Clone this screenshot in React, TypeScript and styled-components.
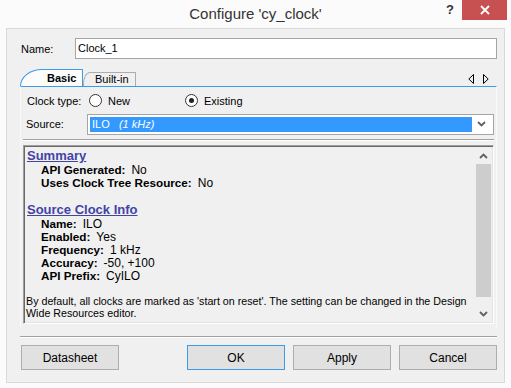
import React from 'react';
import styled, { createGlobalStyle } from 'styled-components';

const Global = createGlobalStyle`
  html, body { margin: 0; padding: 0; background: #fbfbfb; }
  body { font-family: "Liberation Sans", Arial, sans-serif; }
  * { box-sizing: border-box; }
`;

const Window = styled.div`
  width: 511px;
  height: 388px;
  background: #fbfbfb;
  display: flex;
  flex-direction: column;
  overflow: hidden;
`;

const TitleBar = styled.div`
  height: 28px;
  flex: none;
  display: grid;
  grid-template-columns: 71px 1fr 71px;
`;

const Title = styled.div`
  text-align: center;
  font-family: "Liberation Sans", Arial, sans-serif;
  font-size: 15px;
  line-height: 28px;
  color: #333;
`;

const Controls = styled.div`
  display: flex;
  justify-content: flex-end;
  align-items: flex-start;
  padding-right: 4px;
`;

const Help = styled.div`
  width: 16px;
  margin-right: 4px;
  text-align: center;
  font-family: "Liberation Sans", Arial, sans-serif;
  font-weight: bold;
  font-size: 13px;
  line-height: 20px;
  color: #333;
`;

const Close = styled.div`
  width: 45px;
  height: 20px;
  background: #c75050;
  display: flex;
  align-items: center;
  justify-content: center;
`;

const Body = styled.div`
  flex: 1;
  margin: 0 6px 5px 6px;
  border: 1px solid #d9d9d9;
  background: #f0f0f0;
  padding: 9px 7px 0 13px;
  display: flex;
  flex-direction: column;
  font-size: 11px;
  color: #000;
`;

const FieldRow = styled.div`
  display: flex;
  align-items: center;
  height: 21px;
`;

const Label = styled.div<{ $w: number; $pad?: number }>`
  width: ${(p) => p.$w}px;
  flex: none;
  padding-left: ${(p) => p.$pad ?? 1}px;
  font-size: 11px;
  color: #000;
`;

const TextInput = styled.div`
  flex: 1;
  height: 21px;
  border: 1px solid #a5a5a5;
  background: #fff;
  padding-left: 2px;
  font-size: 11px;
  line-height: 19px;
`;

const TabControl = styled.div`
  margin-top: 10px;
  display: flex;
  flex-direction: column;
`;

const TabStrip = styled.div`
  height: 17px;
  display: flex;
  align-items: flex-end;
`;

const Tab = styled.div<{ $active?: boolean; $w: number }>`
  width: ${(p) => p.$w}px;
  height: ${(p) => (p.$active ? 17 : 14)}px;
  border: 1px solid ${(p) => (p.$active ? '#3c9be8' : '#acacac')};
  border-bottom: none;
  border-radius: ${(p) => (p.$active ? '22px 1px 0 0 / 17px 1px 0 0' : '7px 1px 0 0 / 12px 1px 0 0')};
  background: ${(p) => (p.$active ? '#fcfcfc' : '#f0f0f0')};
  font-size: 11px;
  font-weight: ${(p) => (p.$active ? 'bold' : 'normal')};
  line-height: ${(p) => (p.$active ? 16 : 13)}px;
  padding-left: ${(p) => (p.$active ? 26 : 11)}px;
  color: #000;
`;

const TabArrows = styled.div`
  margin-left: auto;
  display: flex;
  gap: 9px;
  align-self: center;
  margin-right: 8px;
  margin-top: 2px;
`;

const Page = styled.div`
  border-top: 1px solid #3c9be8;
  border-left: 1px solid #f8f8f8;
  border-right: 1px solid #fafafa;
  height: 241px;
  padding: 0 2px;
  display: flex;
  flex-direction: column;
`;

const PageRow = styled.div<{ $h: number; $pad?: number; $top?: number }>`
  height: ${(p) => p.$h}px;
  display: flex;
  align-items: center;
  padding-left: ${(p) => p.$pad ?? 3}px;
  padding-top: ${(p) => p.$top ?? 0}px;
`;

const RadioOption = styled.div<{ $w?: number }>`
  display: flex;
  align-items: center;
  gap: 6px;
  width: ${(p) => (p.$w ? `${p.$w}px` : 'auto')};
  font-size: 11px;
`;

const RadioCircle = styled.div<{ $checked?: boolean }>`
  width: 13px;
  height: 13px;
  border-radius: 50%;
  border: 1px solid #333;
  background: #fff;
  display: flex;
  align-items: center;
  justify-content: center;
  &::after {
    content: '';
    width: 5px;
    height: 5px;
    border-radius: 50%;
    background: ${(p) => (p.$checked ? '#222' : 'transparent')};
  }
`;

const Select = styled.div`
  flex: 1;
  height: 21px;
  border: 1px solid #a5a5a5;
  background: #fff;
  display: flex;
  align-items: center;
  padding: 2px;
`;

const Selected = styled.div`
  flex: 1;
  height: 15px;
  background: #3399ff;
  color: #fff;
  font-size: 11px;
  line-height: 15px;
  padding-left: 2px;
  white-space: pre;
`;

const Hint = styled.span`
  font-style: italic;
`;

const SelectArrow = styled.div`
  width: 19px;
  display: flex;
  justify-content: center;
`;

const Separator = styled.div<{ $top?: number }>`
  margin-top: ${(p) => p.$top ?? 0}px;
  border-top: 1px solid #a0a0a0;
  border-bottom: 1px solid #fff;
`;

const InfoBox = styled.div`
  margin-top: 4px;
  height: 179px;
  border-style: solid;
  border-width: 1px;
  border-color: #a0a0a0 #fff #fff #a0a0a0;
  box-shadow: inset 1px 1px 0 #696969, inset -1px -1px 0 #e3e3e3;
  padding: 1px;
  display: flex;
`;

const InfoContent = styled.div`
  flex: 1;
  padding: 2px 0 0 2px;
  font-size: 12px;
  color: #000;
`;

const Heading = styled.div<{ $gap?: number }>`
  height: 14px;
  font-size: 13px;
  font-weight: bold;
  line-height: 14px;
  color: #4343a6;
  text-decoration: underline;
  margin-top: ${(p) => p.$gap || 0}px;
`;

const Detail = styled.div`
  height: 13px;
  padding-left: 14px;
  line-height: 13px;
  font-size: 12px;
  white-space: nowrap;
  overflow: visible;
`;

const Key = styled.span`
  font-weight: bold;
  font-size: 11.7px;
  margin-right: 6px;
`;

const Note = styled.div`
  margin-top: 13px;
  margin-left: -1px;
  line-height: 12px;
  font-size: 10.7px;
`;

const ScrollBar = styled.div`
  width: 17px;
  flex: none;
  background: #f0f0f0;
  display: flex;
  flex-direction: column;
`;

const ScrollArrow = styled.div`
  height: 17px;
  display: flex;
  align-items: center;
  justify-content: center;
`;

const ScrollThumb = styled.div`
  height: 133px;
  margin: 0 1px;
  background: #cdcdcd;
`;

const Footer = styled.div`
  margin-top: 9px;
  display: flex;
  flex-direction: column;
`;

const Buttons = styled.div`
  margin-top: 7px;
  display: flex;
  gap: 8px;
  padding-left: 1px;
`;

const Button = styled.div<{ $default?: boolean; $push?: boolean }>`
  width: 98px;
  height: 25px;
  border: 1px solid ${(p) => (p.$default ? '#3c9be8' : '#adadad')};
  background: #e1e1e1;
  display: flex;
  align-items: center;
  justify-content: center;
  font-size: 12px;
  color: #000;
  margin-left: ${(p) => (p.$push ? 'auto' : '0')};
`;

const Spacer = styled.div`
  flex: 1;
`;

const Chevron = ({ up }: { up?: boolean }) => (
  <svg width="9" height="6" viewBox="0 0 9 6">
    <path
      d={up ? 'M1 5 L4.5 1.5 L8 5' : 'M1 1 L4.5 4.5 L8 1'}
      fill="none"
      stroke="#606060"
      strokeWidth="1.8"
    />
  </svg>
);

const TriLeft = () => (
  <svg width="6" height="10" viewBox="0 0 6 10">
    <path d="M5.5 0.5 L5.5 9.5 L0.8 5 Z" fill="none" stroke="#000" strokeWidth="1" />
  </svg>
);

const TriRight = () => (
  <svg width="6" height="10" viewBox="0 0 6 10">
    <path d="M0.5 0.5 L0.5 9.5 L5.2 5 Z" fill="none" stroke="#000" strokeWidth="1" />
  </svg>
);

export default function App() {
  return (
    <>
      <Global />
      <Window>
        <TitleBar>
          <div />
          <Title>Configure 'cy_clock'</Title>
          <Controls>
            <Help>?</Help>
            <Close>
              <svg width="10" height="10" viewBox="0 0 10 10">
                <path d="M1 1 L9 9 M9 1 L1 9" stroke="#fff" strokeWidth="1.8" />
              </svg>
            </Close>
          </Controls>
        </TitleBar>
        <Body>
          <FieldRow>
            <Label $w={55}>Name:</Label>
            <TextInput>Clock_1</TextInput>
          </FieldRow>
          <TabControl>
            <TabStrip>
              <Tab $active $w={63}>Basic</Tab>
              <Tab $w={53}>Built-in</Tab>
              <TabArrows>
                <TriLeft />
                <TriRight />
              </TabArrows>
            </TabStrip>
            <Page>
              <PageRow $h={26} $top={1}>
                <Label $w={63}>Clock type:</Label>
                <RadioOption $w={96}>
                  <RadioCircle />
                  New
                </RadioOption>
                <RadioOption>
                  <RadioCircle $checked />
                  Existing
                </RadioOption>
              </PageRow>
              <PageRow $h={22} $pad={0}>
                <Label $w={64} $pad={3}>Source:</Label>
                <Select>
                  <Selected>
                    {'ILO   '}
                    <Hint>(1 kHz)</Hint>
                  </Selected>
                  <SelectArrow>
                    <Chevron />
                  </SelectArrow>
                </Select>
              </PageRow>
              <Separator $top={4} />
              <InfoBox>
                <InfoContent>
                  <Heading>Summary</Heading>
                  <Detail>
                    <Key>API Generated:</Key>No
                  </Detail>
                  <Detail>
                    <Key>Uses Clock Tree Resource:</Key>No
                  </Detail>
                  <Heading $gap={14}>Source Clock Info</Heading>
                  <Detail>
                    <Key>Name:</Key>ILO
                  </Detail>
                  <Detail>
                    <Key>Enabled:</Key>Yes
                  </Detail>
                  <Detail>
                    <Key>Frequency:</Key>1 kHz
                  </Detail>
                  <Detail>
                    <Key>Accuracy:</Key>-50, +100
                  </Detail>
                  <Detail>
                    <Key>API Prefix:</Key>CyILO
                  </Detail>
                  <Note>
                    By default, all clocks are marked as 'start on reset'. The setting can be changed in the Design Wide
                    Resources editor.
                  </Note>
                </InfoContent>
                <ScrollBar>
                  <ScrollArrow>
                    <Chevron up />
                  </ScrollArrow>
                  <ScrollThumb />
                  <Spacer />
                  <ScrollArrow>
                    <Chevron />
                  </ScrollArrow>
                </ScrollBar>
              </InfoBox>
            </Page>
          </TabControl>
          <Footer>
            <Separator />
            <Buttons>
              <Button>Datasheet</Button>
              <Button $push $default>OK</Button>
              <Button>Apply</Button>
              <Button>Cancel</Button>
            </Buttons>
          </Footer>
        </Body>
      </Window>
    </>
  );
}
